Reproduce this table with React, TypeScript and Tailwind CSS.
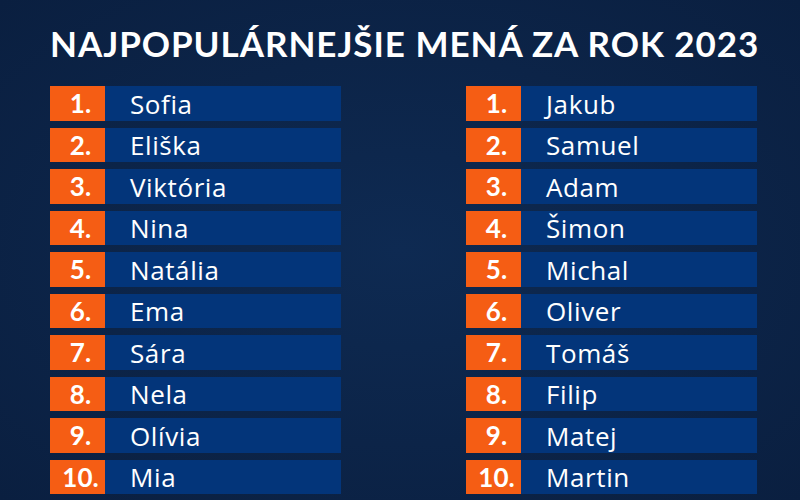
import React from 'react';

const girls = ['Sofia', 'Eliška', 'Viktória', 'Nina', 'Natália', 'Ema', 'Sára', 'Nela', 'Olívia', 'Mia'];
const boys = ['Jakub', 'Samuel', 'Adam', 'Šimon', 'Michal', 'Oliver', 'Tomáš', 'Filip', 'Matej', 'Martin'];

function NameList({ names }: { names: string[] }) {
    return (
        <ol className="flex flex-col gap-[7px] w-[291px]">
            {names.map((name, i) => (
                <li key={name} className="flex h-[34.5px]">
                    <div className="w-[55px] shrink-0 bg-[#f55d14] flex items-center justify-center pl-[6px] text-white font-bold text-[26px] leading-none">
                        {i + 1}.
                    </div>
                    <div className="flex-1 bg-[#03357a] flex items-center pl-[25px] pt-[1px] text-white text-[26px] leading-none font-['Open_Sans',sans-serif] tracking-[0.6px]">
                        {name}
                    </div>
                </li>
            ))}
        </ol>
    );
}

export default function App() {
    return (
        <div
            className="w-[800px] h-[500px] overflow-hidden bg-[radial-gradient(ellipse_at_center,#0e2a52_0%,#0c2448_55%,#0a1f40_100%)] pl-[50px] [font-variant-ligatures:none]"
            style={{ fontFamily: 'Lato, "Open Sans", sans-serif' }}
        >
            <h1 className="pt-[26px] text-white font-bold text-[35px] leading-none tracking-[0.95px] whitespace-nowrap">
                NAJPOPULÁRNEJŠIE MENÁ ZA ROK 2023
            </h1>
            <div className="mt-[25px] flex justify-between w-[707px]">
                <NameList names={girls} />
                <NameList names={boys} />
            </div>
        </div>
    );
}
